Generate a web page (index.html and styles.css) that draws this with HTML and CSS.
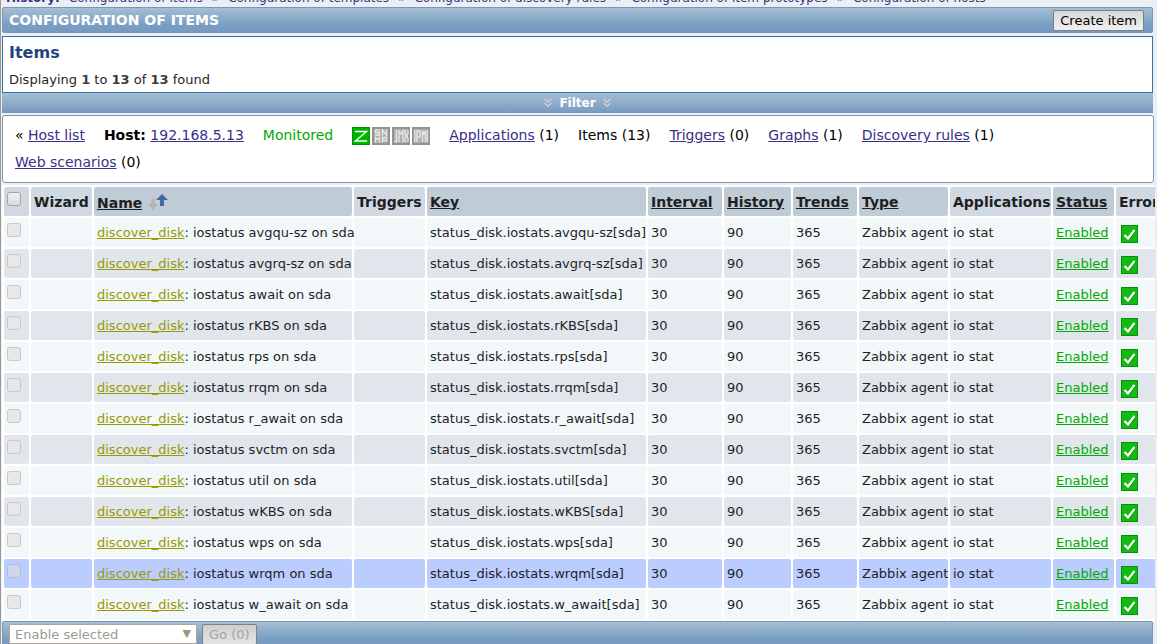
FILE: index.html
```html
<!DOCTYPE html>
<html lang="en">
<head>
    <meta charset="UTF-8">
    <meta name="viewport" content="width=device-width, initial-scale=1.0">
    <title>Configuration of items</title>
    <link rel="stylesheet" href="styles.css">
</head>
<body>
    <svg class="sprite" aria-hidden="true">
        <symbol id="icon-ok" viewBox="0 0 17 18">
            <rect x="0.5" y="0.5" width="16" height="17" fill="#11bb11" stroke="#0a8f0a"/>
            <path d="M4 11l3.500 3.500L14 6" fill="none" stroke="#0a8f0a" stroke-width="2"/>
            <path d="M3.500 10l3.500 3.500L13.500 5" fill="none" stroke="#fff" stroke-width="2.200"/>
        </symbol>
    </svg>

    <nav class="history">
        <strong>History:</strong>
        <a href="#">Configuration of items</a><span>»</span>
        <a href="#">Configuration of templates</a><span>»</span>
        <a href="#">Configuration of discovery rules</a><span>»</span>
        <a href="#">Configuration of item prototypes</a><span>»</span>
        <a href="#">Configuration of hosts</a>
    </nav>

    <header class="title-bar">
        <h1>CONFIGURATION OF ITEMS</h1>
        <button type="button" class="button">Create item</button>
    </header>

    <section class="summary">
        <h2>Items</h2>
        <p>Displaying <b>1</b> to <b>13</b> of <b>13</b> found</p>
    </section>
    <button type="button" class="filter-bar">
        <svg width="8" height="10" viewBox="0 0 8 10"><path d="M0.5 1l3.5 3 3.5-3M0.5 5l3.5 3 3.5-3" fill="none" stroke="#d3d3d3" stroke-width="1.4"/></svg>
        Filter
        <svg width="8" height="10" viewBox="0 0 8 10"><path d="M0.5 1l3.5 3 3.5-3M0.5 5l3.5 3 3.5-3" fill="none" stroke="#d3d3d3" stroke-width="1.4"/></svg>
    </button>

    <ul class="object-menu">
        <li>« <a href="#">Host list</a></li>
        <li><b>Host:</b> <a href="#">192.168.5.13</a></li>
        <li class="monitored">Monitored</li>
        <li class="interfaces">
            <svg width="18" height="18" viewBox="0 0 18 18">
                <rect x="0.5" y="0.5" width="17" height="17" fill="#00b400" stroke="#078d07"/>
                <path d="M3 4.500h11.500L3.500 14H15" fill="none" stroke="#e9ffe9" stroke-width="1.500"/>
            </svg>
            <svg width="18" height="18" viewBox="0 0 18 18">
                <rect x="1" y="1" width="16" height="16" fill="#b0b0b0" stroke="#939393" stroke-width="2"/>
                <path d="M7.500 3H3.500v2.500h4V8H3M10.500 8.500V3l4 5V2.500M3.500 15.500V10.500l2 2 2-2v5M10.500 15.500v-5h4v3h-4" fill="none" stroke="#e8e8e8" stroke-width="1.300"/>
            </svg>
            <svg width="18" height="18" viewBox="0 0 18 18">
                <rect x="1" y="1" width="16" height="16" fill="#b0b0b0" stroke="#939393" stroke-width="2"/>
                <path d="M4.500 3v11.500h-2M7 15V4l2 3 2-3v11M13 3v4l3 4v4M16 3v4l-3 4v4" fill="none" stroke="#e8e8e8" stroke-width="1.300"/>
            </svg>
            <svg width="18" height="18" viewBox="0 0 18 18">
                <rect x="1" y="1" width="16" height="16" fill="#b0b0b0" stroke="#939393" stroke-width="2"/>
                <path d="M2.700 3v12M5 15V4h3v6H5M10.500 15V4l1.500 3 1.500-3v11M15.500 3v12" fill="none" stroke="#e8e8e8" stroke-width="1.300"/>
            </svg>
        </li>
        <li><a href="#">Applications</a> (1)</li>
        <li>Items (13)</li>
        <li><a href="#">Triggers</a> (0)</li>
        <li><a href="#">Graphs</a> (1)</li>
        <li><a href="#">Discovery rules</a> (1)</li>
        <li><a href="#">Web scenarios</a> (0)</li>
    </ul>

    <form>
        <div class="table-wrap">
            <table class="items">
                <thead>
                    <tr>
                        <th class="col-check"><input type="checkbox" aria-label="Select all items"></th>
                        <th class="col-wizard">Wizard</th>
                        <th class="sortable col-name"><a href="#">Name</a>
                            <svg class="sort" width="21" height="18" viewBox="0 0 21 18"><path d="M4 6h4v5h3l-5 6-5-6h3z" fill="#b4b4b4"/><path d="M15 1l6 6h-4v6h-4V7H9z" fill="#4567a5"/></svg>
                        </th>
                        <th class="col-triggers">Triggers</th>
                        <th class="sortable col-key"><a href="#">Key</a></th>
                        <th class="sortable col-interval"><a href="#">Interval</a></th>
                        <th class="sortable col-history"><a href="#">History</a></th>
                        <th class="sortable col-trends"><a href="#">Trends</a></th>
                        <th class="sortable col-type"><a href="#">Type</a></th>
                        <th class="col-apps">Applications</th>
                        <th class="sortable col-status"><a href="#">Status</a></th>
                        <th class="col-error">Error</th>
                    </tr>
                </thead>
                <tbody id="itemRows"></tbody>
            </table>
        </div>

        <div class="footer-bar">
            <div class="select-wrap">
                <select aria-label="Action" disabled>
                    <option>Enable selected</option>
                </select>
            </div>
            <button type="button" class="button" disabled>Go (0)</button>
        </div>
    </form>

    <script>
        const metrics = ['avgqu-sz', 'avgrq-sz', 'await', 'rKBS', 'rps', 'rrqm', 'r_await',
            'svctm', 'util', 'wKBS', 'wps', 'wrqm', 'w_await'];
        const itemRows = document.getElementById('itemRows');

        metrics.forEach(function(metric) {
            const row = document.createElement('tr');
            if (metric === 'wrqm') { row.className = 'highlight'; }
            row.innerHTML = `
                <td><input type="checkbox" aria-label="Select ${metric}" disabled></td>
                <td></td>
                <td><a class="rule" href="#">discover_disk</a>: iostatus ${metric} on sda</td>
                <td></td>
                <td>status_disk.iostats.${metric}[sda]</td>
                <td>30</td>
                <td>90</td>
                <td>365</td>
                <td>Zabbix agent</td>
                <td>io stat</td>
                <td><a class="enabled" href="#">Enabled</a></td>
                <td><svg class="ok" width="17" height="18"><use href="#icon-ok"/></svg></td>`;
            itemRows.appendChild(row);
        });
    </script>
</body>
</html>
```
FILE: styles.css
```css
* {
    box-sizing: border-box;
}
html {
    overflow: hidden;
}
body {
    margin: 0;
    padding: 0 4px 0 1px;
    border-left: 1px solid #9a9a90;
    background-color: #ebeff3;
    color: #1f1f1f;
    font-family: Verdana, "DejaVu Sans", sans-serif;
    font-size: 13px;
}
a {
    color: #3a2f86;
}
.sprite {
    position: absolute;
    width: 0;
    height: 0;
}
.history {
    display: flex;
    align-items: flex-end;
    height: 5px;
    margin-bottom: 2px;
    padding-left: 4px;
    overflow: hidden;
    white-space: nowrap;
    font-size: 12px;
    line-height: 14px;
    color: #3a2f86;
}
.history strong {
    margin-right: 9px;
}
.history span {
    margin: 0 9px;
}
.history a {
    text-decoration: none;
}
.title-bar,
.footer-bar {
    display: flex;
    align-items: center;
    border: 1px solid #7a97bb;
    border-radius: 2px;
    background: linear-gradient(#a5bed5, #799ec3 70%, #7799c0);
}
.title-bar {
    justify-content: space-between;
    height: 26px;
    margin-bottom: 3px;
    padding: 0 8px 0 6px;
}
h1 {
    margin: 0;
    color: #fff;
    font-size: 14px;
}
.button {
    height: 21px;
    padding: 0 6px;
    border: 1px solid #808080;
    border-radius: 2px;
    background: linear-gradient(#d8d8d8, #efefef);
    color: #000;
    font-family: inherit;
    font-size: 13px;
}
.summary {
    height: 57px;
    padding: 5px 6px;
    border: 1px solid #2f76ae;
    background-color: #fff;
}
h2 {
    margin: 0 0 8px;
    color: #1f4280;
    font-size: 16px;
    line-height: 21px;
}
.summary p {
    margin: 0;
    line-height: 18px;
    font-size: 13px;
}
.summary b {
    color: #3c3c3c;
}
.filter-bar {
    display: flex;
    align-items: center;
    justify-content: center;
    gap: 7px;
    width: 100%;
    height: 20px;
    padding: 0;
    border: 0;
    background: linear-gradient(#a5bed5, #7799c0);
    color: #fff;
    font-family: inherit;
    font-size: 12px;
    font-weight: bold;
}
.object-menu {
    display: flex;
    flex-wrap: wrap;
    column-gap: 19px;
    margin: 2px 0;
    margin-right: -1px;
    padding: 6px 32px 6px 12px;
    border: 1px solid #7a97b5;
    border-radius: 3px;
    background-color: #fff;
    color: #000;
    font-size: 14px;
    line-height: 27px;
    list-style: none;
}
.monitored {
    color: #00aa00;
}
.interfaces {
    display: flex;
    align-items: center;
    gap: 2px;
}
.table-wrap {
    margin-right: -2px;
    overflow: hidden;
    background-color: #fff;
}
.items {
    width: 1180px;
    table-layout: fixed;
    border-spacing: 2px;
    white-space: nowrap;
}
.items th,
.items td {
    height: 29px;
    padding: 0 0 0 3px;
    border-radius: 2px;
    text-align: left;
}
.items th {
    background-color: #d0d8e1;
    font-size: 14px;
}
.items th.sortable {
    background-color: #bfcbd5;
}
.items th a {
    color: inherit;
}
.items td {
    background-color: #f2f7fa;
}
.items tr:nth-child(even) td {
    background-color: #e1e6ed;
}
.items tbody tr.highlight td {
    background-color: #bbccff;
}
.items input {
    display: block;
    width: 14px;
    height: 14px;
    margin: 0 0 6px;
    border: 1px solid #a5a5a5;
    border-radius: 3px;
    background: linear-gradient(#f0f0f0, #dcdcdc);
    appearance: none;
}
.items input:disabled {
    border-color: #c8c8c8;
    background: #e8e8e8;
}
.items tr.highlight input:disabled {
    border-color: #b4bcd8;
    background: #d0d5ec;
}
.col-check { width: 25px; }
.col-wizard { width: 61px; }
.col-name { width: 258px; }
.col-triggers { width: 71px; }
.col-key { width: 219px; }
.col-interval { width: 74px; }
.col-history { width: 67px; }
.col-trends { width: 64px; }
.col-type { width: 89px; }
.col-apps { width: 101px; }
.col-status { width: 61px; }
.sort {
    vertical-align: text-bottom;
}
.rule {
    color: #999900;
}
.enabled {
    color: #00aa00;
}
.ok {
    display: block;
    margin: 3px 0 0 2px;
}
.footer-bar {
    gap: 5px;
    height: 26px;
    padding: 0 6px;
}
.select-wrap {
    position: relative;
}
.select-wrap::after {
    content: "▼";
    position: absolute;
    top: 3px;
    right: 6px;
    color: #9b9786;
    font-size: 11px;
}
.select-wrap select {
    width: 188px;
    height: 20px;
    padding: 0 5px;
    border: 1px solid #aca899;
    background-color: #fff;
    color: #9b9b93;
    font-family: inherit;
    font-size: 13px;
    opacity: 1;
    appearance: none;
}
.footer-bar .button {
    background: linear-gradient(#cfcfcf, #e4e4e4);
    color: #a3a3a3;
}
```
